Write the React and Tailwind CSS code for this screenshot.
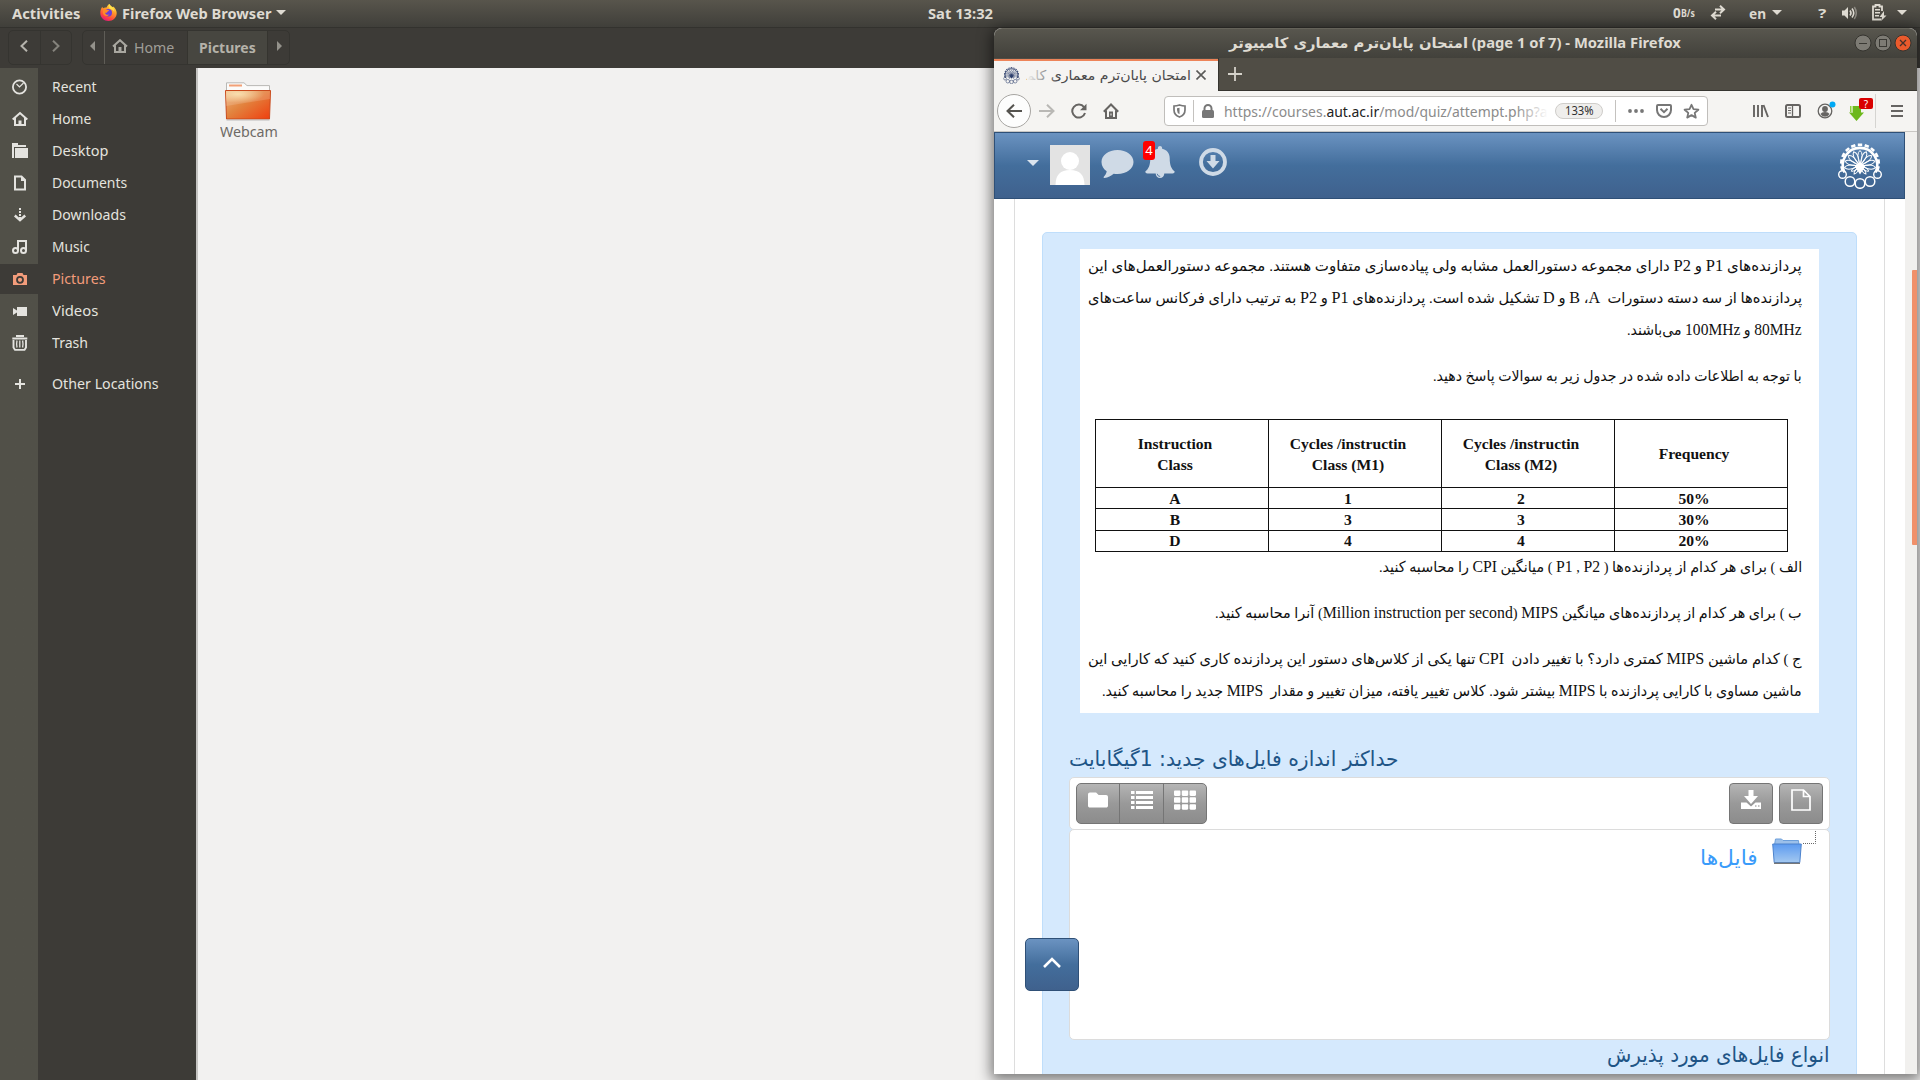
import React, { useLayoutEffect, useRef, useState } from "react";
import { FaFolder, FaTh } from "react-icons/fa";

// Single line of text stretched or squeezed to an exact width.
function Fit({ w, justify = false, className = "", dir, children }) {
  const ref = useRef(null);
  const [style, setStyle] = useState({});
  useLayoutEffect(() => {
    const el = ref.current;
    const natural = el.offsetWidth;
    const spaces = (el.textContent.match(/ /g) || []).length;
    if (justify && spaces && natural < w) {
      setStyle({ wordSpacing: `${(w - natural) / spaces}px` });
    } else {
      setStyle({ transform: `scaleX(${w / natural})` });
    }
  }, [w, justify]);
  return (
    <span className={`block shrink-0 text-left ${className}`} dir="ltr" style={{ width: w }}>
      <span ref={ref} dir={dir} className="inline-block origin-left whitespace-pre" style={style}>
        {children}
      </span>
    </span>
  );
}

// Persian line whose Latin runs are set slightly larger than the Persian letters.
function Line({ w, justify, className, text }) {
  return (
    <Fit w={w} justify={justify} dir="rtl" className={className}>
      {text.split(/([A-Za-z0-9]+)/).map((part, i) =>
        i % 2 ? <span key={i} className="text-[16.5px] leading-none">{part}</span> : part
      )}
    </Fit>
  );
}

const Caret = ({ className = "" }) => (
  <svg className={`shrink-0 ${className}`} width="10" height="5" viewBox="0 0 10 5">
    <path d="M0 0h10L5 5z" fill="currentColor" />
  </svg>
);

function FirefoxLogo() {
  return (
    <svg width="17" height="17" viewBox="0 0 17 17" className="shrink-0">
      <defs>
        <linearGradient id="fx" x1="0.8" y1="0" x2="0.3" y2="1">
          <stop offset="0" stopColor="#fff14f" />
          <stop offset="0.4" stopColor="#ff9a2a" />
          <stop offset="0.75" stopColor="#ff4a3c" />
          <stop offset="1" stopColor="#e5157e" />
        </linearGradient>
      </defs>
      <path d="M9.500 0c.5 1.500 1.700 2.200 3 3.200l.6-.7c2.200 1.600 3.600 4 3.600 6.500 0 4.500-3.700 8-8.200 8S.3 13.500.3 9c0-2 .4-4.300 2-6.300l.7 1.600C4 3.400 5.500 3.300 6.500 3.600 7.200 2 8 .6 9.500 0z" fill="url(#fx)" />
      <circle cx="8.300" cy="8.800" r="3.700" fill="#6b3fd6" />
      <path d="M3.600 5.600c1.500-.7 3-.4 4 .4l1.600.2c-.2 1-1.600 1-2 1.800-.2.900-1.200 1-2 .7.300 2 2.500 2.600 4.200 1.500-1.600 3-6 2-6.500-1.200-.1-1.300.1-2.500.7-3.400z" fill="#ff8a28" />
      <path d="M9.500 0c.5 1.500 1.700 2.200 3 3.200 1.300 1.200 1.900 2.700 1.700 4.500C13 5.600 11 5.200 9.400 4.600 8.600 3 8.700 1.200 9.500 0z" fill="#ffe14a" />
    </svg>
  );
}

const HomeGlyph = ({ className = "" }) => (
  <svg width="16" height="14" viewBox="0 0 16 14" className={`shrink-0 ${className}`}>
    <path d="M1 7.500L8 1.200l7 6.300M3 6.500V13h10V6.500" fill="none" stroke="currentColor" strokeWidth="2" />
    <path d="M6.500 13V8h3v5z" fill="currentColor" />
  </svg>
);

const sideIcons = {
  Recent: (
    <>
      <circle cx="7.500" cy="8" r="6.600" fill="none" stroke="currentColor" strokeWidth="1.800" />
      <path d="M4.500 5l3 3 4-4" fill="none" stroke="currentColor" strokeWidth="1.200" />
    </>
  ),
  Home: (
    <>
      <path d="M.7 8.500L8 2l7.300 6.500M3 7v7h10V7" fill="none" stroke="currentColor" strokeWidth="2" />
      <path d="M6.500 14V9.500h3V14z" fill="currentColor" />
    </>
  ),
  Desktop: <path d="M0 0h6v2h8v2H2v11H0zM3 5h13v10H3z" fill="currentColor" />,
  Documents: (
    <>
      <path d="M3 1.500h6.500L13 5v9.500H3z" fill="none" stroke="currentColor" strokeWidth="2" />
      <path d="M9 1v5h5z" fill="currentColor" />
    </>
  ),
  Downloads: (
    <>
      <path d="M7 1h2v2H7zM7 4h2v2H7zM7 7h2v2H7zM7 10h2v3H7z" fill="currentColor" />
      <path d="M2.800 8.500L8 13.200l5.200-4.700" fill="none" stroke="currentColor" strokeWidth="2.400" />
    </>
  ),
  Music: (
    <>
      <circle cx="3.500" cy="11.500" r="2.500" fill="none" stroke="currentColor" strokeWidth="2" />
      <circle cx="11.500" cy="11.500" r="2.500" fill="none" stroke="currentColor" strokeWidth="2" />
      <path d="M6 11.500V2h8v9.500" fill="none" stroke="currentColor" strokeWidth="2" />
    </>
  ),
  Pictures: (
    <>
      <path d="M1 4h3.500l1-2h5l1 2H15v10H1z" fill="currentColor" />
      <circle cx="8" cy="8.800" r="3" fill="none" stroke="#3d3b37" strokeWidth="1.800" />
    </>
  ),
  Videos: <path d="M5 4h10v9H5V9.500L1 12V5l4 2.500z" fill="currentColor" />,
  Trash: (
    <>
      <path d="M4 1h8M.3 3.500h15" stroke="currentColor" strokeWidth="1.800" />
      <path d="M1.500 5v7.500l1.500 2.400h9.500l1.500-2.400V5" fill="none" stroke="currentColor" strokeWidth="1.900" />
      <path d="M5 5.500q-.8 3.500 0 7M7.800 5.500v7M10.600 5.500q.8 3.500 0 7" fill="none" stroke="currentColor" strokeWidth="1.300" />
    </>
  ),
  "Other Locations": <path d="M7 3h2v4h4v2H9v4H7V9H3V7h4z" fill="currentColor" />,
};

const places = [
  ["Recent", 45],
  ["Home", 39],
  ["Desktop", 56],
  ["Documents", 75],
  ["Downloads", 74],
  ["Music", 38],
  ["Pictures", 54],
  ["Videos", 46],
  ["Trash", 36],
  ["Other Locations", 107],
];

function TopBar() {
  return (
    <header className="flex h-7 items-center border-b border-[#33322e] bg-linear-to-b from-[#58554c] to-[#403f3a] pb-0.5 text-[14.5px] leading-[26px] font-bold text-[#dfdbd2]">
      <Fit w={68} className="ml-3">Activities</Fit>
      <div className="ml-5"><FirefoxLogo /></div>
      <Fit w={149} className="ml-[5px]">Firefox Web Browser</Fit>
      <Caret className="ml-[5px]" />
      <Fit w={65} className="ml-[642px]">Sat 13:32</Fit>
      <Fit w={8} className="ml-[680px] text-[13.5px]">0</Fit>
      <Fit w={14} className="text-[10px]">B/s</Fit>
      <svg width="16" height="15" viewBox="0 0 16 15" className="ml-[15px] shrink-0" fill="none" stroke="currentColor" strokeWidth="2">
        <path d="M5 4.500h9M10 .8l4 3.700-4 3.700M11 10.500H2M6 6.800l-4 3.700 4 3.700" />
      </svg>
      <Fit w={17} className="ml-[23px]">en</Fit>
      <Caret className="ml-1.5" />
      <Fit w={8} className="ml-9 text-[13px]">?</Fit>
      <svg width="17" height="14" viewBox="0 0 17 14" className="ml-[15px] shrink-0">
        <path d="M1 4.500h2.500L7 1v12L3.500 9.500H1z" fill="currentColor" />
        <path d="M9 4.500q2 2.500 0 5M11 2.500q3.500 4.500 0 9" fill="none" stroke="currentColor" strokeWidth="1.600" />
        <path d="M13.300 1q4 6 0 12" fill="none" stroke="#8d8a82" strokeWidth="1.500" />
      </svg>
      <svg width="15" height="17" viewBox="0 0 15 17" className="ml-3.5 shrink-0">
        <path d="M9 15.500H1V2.500h2.500V1h4v1.500H10V7" fill="none" stroke="currentColor" strokeWidth="1.800" />
        <path d="M3 5h5v1.500H3zM3 8h5v1.500H3zM3 11h4v1.500H3z" fill="currentColor" />
        <path d="M12 7l-4.500 6H10l-1 4 5.500-5.500H12z" fill="currentColor" />
      </svg>
      <Caret className="ml-2.5" />
    </header>
  );
}

function Files() {
  return (
    <>
      <div className="flex h-10 bg-[#3d3b37] pt-0.5 text-[14.5px] leading-[35px] text-[#a09e97]">
        <div className="ml-2 flex h-[35px] w-16 rounded-[5px] border border-[#353430]">
          <div className="flex w-8 items-center justify-center border-r border-[#353430] pr-0.5 pb-1">
            <svg width="8" height="12" viewBox="0 0 8 12"><path d="M7 .7L1.500 6 7 11.300" fill="none" stroke="#b5b3ac" strokeWidth="2" /></svg>
          </div>
          <div className="flex flex-1 items-center justify-center pb-1">
            <svg width="8" height="12" viewBox="0 0 8 12"><path d="M1 .7L6.500 6 1 11.300" fill="none" stroke="#85837c" strokeWidth="2" /></svg>
          </div>
        </div>
        <div className="ml-2.5 flex h-[35px] w-[208px] rounded-[5px] border border-[#353430]">
          <div className="flex w-[22px] items-center justify-center border-r border-[#5f5d57] pr-0.5 pb-1">
            <svg width="5" height="10" viewBox="0 0 5 10"><path d="M5 0v10L0 5z" fill="#94928b" /></svg>
          </div>
          <div className="flex w-[82px] items-center pl-[7px]">
            <HomeGlyph className="-mt-1 text-[#a9a7a0]" />
            <Fit w={40} className="ml-1.5">Home</Fit>
          </div>
          <div className="flex w-[81px] items-center border-x border-[#35342f] bg-[#474640] pl-[11px] font-bold text-[#b5b2a9]">
            <Fit w={57}>Pictures</Fit>
          </div>
          <div className="flex flex-1 items-center justify-center pb-1 pl-0.5">
            <svg width="5" height="10" viewBox="0 0 5 10"><path d="M0 0v10l5-5z" fill="#94928b" /></svg>
          </div>
        </div>
      </div>
      <div className="flex h-[1012px] bg-[#f2f1f0]">
        <nav className="flex w-[198px] flex-col border-r-2 border-[#c4c3c1] bg-linear-to-r from-[#515048] from-[38px] to-[#3d3b37] to-[38px] pt-1 text-[14.5px] leading-[28px] text-[#e4e3df]">
          {places.map(([name, w]) => (
            <div
              key={name}
              className={
                name === "Pictures"
                  ? "mb-0.5 flex h-[30px] items-start bg-[#3d3b37] text-[#f39c7b]"
                  : name === "Other Locations"
                    ? "mt-[9px] mb-0.5 flex h-[30px] items-start"
                    : "mb-0.5 flex h-[30px] items-start"
              }
            >
              <svg width="16" height="16" viewBox="0 0 16 16" className="mt-[7px] ml-3 shrink-0">{sideIcons[name]}</svg>
              <Fit w={w} className="ml-6">{name}</Fit>
            </div>
          ))}
        </nav>
        <div className="flex w-[100px] flex-col items-center pt-3.5">
          <svg width="48" height="39" viewBox="0 0 48 39">
            <defs>
              <linearGradient id="fold" x1="0" y1="0" x2="1" y2="0.9">
                <stop offset="0" stopColor="#efb27c" />
                <stop offset="0.45" stopColor="#e2843f" />
                <stop offset="1" stopColor="#ee4412" />
              </linearGradient>
              <radialGradient id="glow" cx="0.27" cy="0.2" r="0.6">
                <stop offset="0" stopColor="#f8d9a0" />
                <stop offset="1" stopColor="#f8d9a0" stopOpacity="0" />
              </radialGradient>
            </defs>
            <path d="M2.500 12V.8h17.500l3 2.800h22.500V12z" fill="#fbfbfa" stroke="#b9b8b5" />
            <path d="M5 2.500h13v2H5z" fill="#f2a077" />
            <path d="M1.500 8.500h45l-1 28.500h-43z" fill="url(#fold)" stroke="#c94a1c" />
            <path d="M2 9h44v10L2 24z" fill="url(#glow)" />
            <path d="M2 9h44v8L2 24z" fill="#fff" opacity="0.15" />
            <path d="M2.500 38h43" stroke="#bbb" />
          </svg>
          <Fit w={58} className="-mt-0.5 ml-px text-[14.5px] leading-6 text-[#6e6a66]">Webcam</Fit>
        </div>
      </div>
    </>
  );
}

// University crest: toothed arch, radiating petals and a chain of rings.
function Crest({ size, className = "" }) {
  const petals = [-144, -120, -96, -72, -48, -24, 0, 24, 48, 72, 96, 120, 144];
  const teeth = Array.from({ length: 11 }, (_, i) => -105 + i * 21);
  return (
    <svg width={size} height={size} viewBox="0 0 44 46" className={`shrink-0 ${className}`} fill="none" stroke="currentColor">
      <path d="M6.500 29.500A17.200 17.200 0 1 1 37.500 29.500" strokeWidth="2.600" />
      {teeth.map((a) => (
        <path key={a} d="M19.800 1.800h4.400" strokeWidth="2.600" transform={`rotate(${a} 22 20.500)`} />
      ))}
      {petals.map((a) => (
        <path
          key={a}
          d={Math.abs(a) > 100 ? "M22 21.500q-2.600-6 0-8.500q2.600 2.500 0 8.500z" : "M22 21.500q-4.200-11 0-14q4.200 3 0 14z"}
          strokeWidth="1"
          transform={`rotate(${a} 22 23)`}
        />
      ))}
      <path d="M16 22l6 9.500 6-9.500-6 2z" fill="currentColor" stroke="none" />
      <circle cx="22" cy="22.500" r="2.600" fill="currentColor" stroke="none" />
      <circle cx="4.500" cy="31.500" r="3.800" strokeWidth="1.400" />
      <circle cx="39.500" cy="31.500" r="3.800" strokeWidth="1.400" />
      <circle cx="12" cy="38.500" r="4.800" strokeWidth="1.500" />
      <circle cx="32" cy="38.500" r="4.800" strokeWidth="1.500" />
      <circle cx="22" cy="40.500" r="4.800" strokeWidth="1.500" />
    </svg>
  );
}

function TitleBar() {
  return (
    <div className="flex h-[30px] shrink-0 items-center rounded-t-lg border-t border-[#65635a] bg-linear-to-b from-[#58564e] to-[#42413b] text-[14.5px] leading-[26px] font-bold text-[#dfdbd2]">
      <Fit w={452} className="-mt-0.5 ml-[235px]">
        <bdi dir="rtl" className="font-['DejaVu_Sans']">امتحان پایان‌ترم معماری کامپیوتر</bdi>
        {" (page 1 of 7) - Mozilla Firefox"}
      </Fit>
      <svg width="60" height="18" viewBox="0 0 60 18" className="-mt-px ml-[172px] shrink-0">
        <circle cx="10" cy="9" r="8" fill="#7d7b74" stroke="#35342f" />
        <path d="M6 9.500h8" stroke="#3a3934" />
        <circle cx="30" cy="9" r="8" fill="#7d7b74" stroke="#35342f" />
        <rect x="26.500" y="5.500" width="7" height="7" fill="none" stroke="#3a3934" />
        <circle cx="50" cy="9" r="8" fill="#ea5a2c" stroke="#35342f" />
        <path d="M47 6l6 6M53 6l-6 6" stroke="#45302a" strokeWidth="1.300" />
      </svg>
    </div>
  );
}

function TabStrip() {
  return (
    <div className="flex h-[33px] shrink-0 bg-[#504d45]">
      <div className="mt-px flex w-56 shrink-0 items-center border-t-2 border-[#ed8459] bg-[#f5f4f2] pb-0.5">
        <Crest size={17} className="ml-[9px] text-[#2c3e6b]" />
        <div className="relative ml-[7px] flex h-full items-center">
          <Fit w={164} dir="rtl" className="font-['DejaVu_Sans'] text-[13.5px] leading-[28px] text-[#4a4a4a]">امتحان پایان‌ترم معماری کا‍م‍</Fit>
          <div className="absolute inset-y-0 left-0 w-8 bg-linear-to-r from-[#f5f4f2] to-[#f5f4f2]/0" />
        </div>
        <svg width="10" height="10" viewBox="0 0 10 10" className="ml-[5px] shrink-0"><path d="M.5.5l9 9M9.500.5l-9 9" stroke="#5a5a58" strokeWidth="1.600" /></svg>
      </div>
      <div className="flex flex-1 items-center border-b border-l border-[#363530] pl-[9px]">
        <svg width="14" height="14" viewBox="0 0 14 14"><path d="M7 0v14M0 7h14" stroke="#d5d2ca" strokeWidth="1.800" /></svg>
      </div>
    </div>
  );
}

function NavBar() {
  return (
    <div className="flex h-[41px] shrink-0 items-center border-b border-[#c9c7c4] bg-[#f5f4f2] text-[#666462]">
      <div className="ml-[3px] flex size-[34px] shrink-0 items-center justify-center rounded-full border border-[#a7a5a2] bg-[#fdfdfd]">
        <svg width="16" height="14" viewBox="0 0 16 14"><path d="M16 7H1.500M8 .7L1.500 7 8 13.300" fill="none" stroke="#55534f" strokeWidth="2" /></svg>
      </div>
      <svg width="16" height="14" viewBox="0 0 16 14" className="ml-2 shrink-0"><path d="M0 7h14.500M8 .7L14.500 7 8 13.300" fill="none" stroke="#b9b8b5" strokeWidth="2" /></svg>
      <svg width="16" height="16" viewBox="0 0 16 16" className="ml-4 shrink-0">
        <path d="M13 4.200A6.500 6.500 0 1 0 14 10" fill="none" stroke="currentColor" strokeWidth="2" />
        <path d="M15.500.8v6.400H9z" fill="currentColor" />
      </svg>
      <svg width="16" height="16" viewBox="0 0 16 16" className="ml-4 shrink-0">
        <path d="M.8 8.800L8 1.500l7.200 7.300M3 7.500V15h10V7.500" fill="none" stroke="currentColor" strokeWidth="2" />
        <path d="M6 14V8.500h4V14z" fill="currentColor" /><path d="M8 10.500v2" stroke="#f5f4f2" />
      </svg>
      <div className="ml-[45px] flex h-[30px] w-[544px] shrink-0 items-center rounded-[4px] border border-[#c0bebb] bg-white text-[#777]">
        <svg width="13" height="14" viewBox="0 0 13 14" className="ml-2 shrink-0">
          <path d="M6.500 1q3 .9 5.500 1v4q0 5-5.500 7Q1 11 1 6V2q2.500-.1 5.500-1z" fill="none" stroke="currentColor" strokeWidth="1.700" />
          <path d="M6.500 3.800v6.500Q4 9 4 6V4.200z" fill="currentColor" />
        </svg>
        <div className="ml-[7px] h-[22px] w-px shrink-0 bg-[#c4c2bf]" />
        <svg width="12" height="14" viewBox="0 0 12 14" className="ml-2 shrink-0"><rect y="6" width="12" height="8" rx="1.500" fill="currentColor" /><path d="M2.500 7V4.500a3.500 3.500 0 0 1 7 0V7" fill="none" stroke="currentColor" strokeWidth="2" /></svg>
        <div className="relative ml-2.5 w-[324px] shrink-0">
          <Fit w={324} className="text-[15px] leading-[28px] text-[#8b8b8b]">
            https://courses.<span className="text-[#222]">aut.ac.ir</span>/mod/quiz/attempt.php?a
          </Fit>
          <div className="absolute inset-y-0 right-0 w-8 bg-linear-to-r from-white/0 to-white" />
        </div>
        <div className="ml-[7px] flex h-4 w-12 shrink-0 items-center justify-center rounded-full border border-[#cfcdca] bg-[#efeeec] text-[12px] leading-4 text-[#333]">
          <Fit w={29}>133%</Fit>
        </div>
        <div className="ml-3 h-[22px] w-px shrink-0 bg-[#c4c2bf]" />
        <svg width="16" height="4" viewBox="0 0 16 4" className="ml-3 shrink-0" fill="currentColor"><circle cx="2" cy="2" r="1.900" /><circle cx="8" cy="2" r="1.900" /><circle cx="14" cy="2" r="1.900" /></svg>
        <svg width="16" height="14" viewBox="0 0 16 14" className="ml-3 shrink-0" fill="none" stroke="currentColor" strokeWidth="2"><path d="M1 2q0-1 1-1h12q1 0 1 1v4a7 7 0 0 1-14 0z" /><path d="M4.500 4.800L8 8.200l3.500-3.400" /></svg>
        <svg width="17" height="16" viewBox="0 0 17 16" className="ml-[11px] shrink-0"><path d="M8.500 1.800l2 4.400 4.900.5-3.700 3.200 1.100 4.700-4.300-2.500-4.300 2.500 1.100-4.700-3.700-3.200 4.900-.5z" fill="none" stroke="currentColor" strokeWidth="1.800" strokeLinejoin="round" /></svg>
      </div>
      <svg width="16" height="14" viewBox="0 0 16 14" className="ml-[45px] shrink-0" fill="none" stroke="currentColor" strokeWidth="1.900"><path d="M1 1v12M5 1v12M9 1v12M10.500 1l4.500 12" /></svg>
      <svg width="16" height="14" viewBox="0 0 16 14" className="ml-4 shrink-0" fill="none" stroke="currentColor" strokeWidth="2"><rect x="1" y="1" width="14" height="12" rx="1.500" /><path d="M7.500 1v12" strokeWidth="1.300" /><path d="M3 4h3M3 6.500h3M3 9h3" strokeWidth="1.200" /></svg>
      <svg width="19" height="18" viewBox="0 0 19 18" className="-mt-0.5 ml-4 shrink-0">
        <circle cx="8" cy="10" r="6.800" fill="none" stroke="currentColor" strokeWidth="1.300" />
        <circle cx="8" cy="8" r="2.900" fill="currentColor" /><path d="M3.500 13q1-2 4.500-2t4.500 2Q11 15.700 8 15.700T3.500 13z" fill="currentColor" />
        <circle cx="15.500" cy="3.500" r="3" fill="#00a9f5" />
      </svg>
      <div className="relative ml-[13px] h-6 w-6 shrink-0">
        <svg width="15" height="17" viewBox="0 0 15 17" className="mt-1.5"><path d="M4 1h8v6.500h3L7.500 16 0 7.500h4z" fill="#6db81c" /><path d="M1.500 1v6M3 1v6" stroke="#8fd13c" /></svg>
        <div className="absolute -top-px left-2.5 flex h-[11px] w-3.5 items-center justify-center rounded-[2px] bg-[#d90000] text-[10px] leading-none text-white">?</div>
      </div>
      <div className="ml-0.5 h-[34px] w-px shrink-0 bg-[#d5d4d1]" />
      <svg width="12" height="12" viewBox="0 0 12 12" className="ml-[15px] shrink-0"><path d="M0 1h12M0 6h12M0 11h12" stroke="currentColor" strokeWidth="2" /></svg>
    </div>
  );
}

function SiteHeader() {
  return (
    <div className="flex h-[67px] w-[911px] shrink-0 border border-[#2f5077] bg-linear-to-b from-[#6b93c1] via-[#436e9c] via-50% to-[#3f618d] pt-3 text-[#cfdae6]">
      <svg width="12" height="6" viewBox="0 0 12 6" className="mt-[15px] ml-8 shrink-0"><path d="M0 0h12L6 6z" fill="#dbe4ee" /></svg>
      <svg width="40" height="40" viewBox="0 0 40 40" className="ml-[11px] shrink-0"><path d="M0 0h40v40H0z" fill="#e3e3e3" /><circle cx="20" cy="16" r="9" fill="#fff" /><path d="M5.500 40q0-15 14.500-15t14.500 15z" fill="#fff" /></svg>
      <svg width="33" height="29" viewBox="0 0 33 29" className="mt-[5px] ml-[11px] shrink-0">
        <path d="M16.500 0C25.500 0 32.500 5.300 32.500 12s-7 12-16 12c-1.300 0-2.600-.1-3.800-.3-2.600 2.300-5.700 3.900-9.200 4.300-.9.100-1.200-.7-.7-1.200 1.500-1.500 2.600-3.300 2.900-5.500C2.500 19.100.5 15.800.5 12 .5 5.300 7.500 0 16.500 0z" fill="currentColor" />
      </svg>
      <div className="relative ml-[11px] w-[30px] shrink-0">
        <svg width="30" height="33" viewBox="0 0 30 33" className="mt-px">
          <path d="M15 0c1.200 0 2.100.9 2.100 2v.7c4.700.9 7.600 4.400 7.600 9.300 0 7.500 1.900 11 5 13.500 0 1.200-1 2-2.100 2h-8.300c0 2.400-1.900 4.500-4.300 4.500s-4.300-2.100-4.300-4.500H2.400c-1.200 0-2.100-.8-2.100-2 3.100-2.500 5-6 5-13.500 0-4.900 2.900-8.400 7.600-9.300V2c0-1.100.9-2 2.100-2z" fill="currentColor" />
          <path d="M12.200 27.800q.4 2.600 3 2.700" fill="none" stroke="#47719f" strokeWidth="0.900" />
        </svg>
        <div className="absolute -top-1 -left-0.5 flex h-[19px] w-3 items-center justify-center rounded-[3px] bg-[#f00] text-[13px] leading-none text-white">4</div>
      </div>
      <svg width="28" height="28" viewBox="0 0 28 28" className="mt-[3px] ml-6 shrink-0"><circle cx="14" cy="14" r="12" fill="none" stroke="currentColor" strokeWidth="3.800" /><path d="M11.500 7h5v6h4L14 20.500 7.500 13h4z" fill="currentColor" /></svg>
      <Crest size={46} className="-mt-0.5 ml-[610px] text-white" />
    </div>
  );
}

const rows = [
  ["A", "1", "2", "50%"],
  ["B", "3", "3", "30%"],
  ["D", "4", "4", "20%"],
];

function ExamSheet() {
  const head = "border-[1.5px] border-[#111] p-0 pr-3.5";
  return (
    <div className="ml-[37px] flex h-[464px] w-[739px] flex-col items-end bg-white pt-px pr-[17px] font-['Liberation_Serif','DejaVu_Sans',serif] text-[15px] leading-[32px] text-[#111]">
      <Line w={714} justify text="پردازنده‌های P1 و P2 دارای مجموعه دستورالعمل مشابه ولی پیاده‌سازی متفاوت هستند. مجموعه دستورالعمل‌های این" />
      <Line w={714} justify text={"پردازنده‌ها از سه دسته دستورات  A،\u200f B و D تشکیل شده است. پردازنده‌های P1 و P2 به ترتیب دارای فرکانس ساعت‌های"} />
      <Line w={175} text="80MHz و 100MHz می‌باشند." />
      <Line w={369} className="mt-3.5" text="با توجه به اطلاعات داده شده در جدول زیر به سوالات پاسخ دهید." />
      <table className="mt-[27px] mr-3.5 h-[133px] w-[693px] table-fixed border-collapse text-center text-[15.6px] leading-[21px] font-bold">
        <thead>
          <tr className="h-[68px]">
            <th className={head}>Instruction<br />Class</th>
            <th className={head}>Cycles /instructin<br />Class (M1)</th>
            <th className={head}>Cycles /instructin<br />Class (M2)</th>
            <th className={head}>Frequency</th>
          </tr>
        </thead>
        <tbody>
          {rows.map((r) => (
            <tr key={r[0]} className="h-[21px]">
              {r.map((c, i) => (
                <td key={i} className="border-[1.5px] border-[#111] p-0 pr-3.5 leading-[19px]">{c}</td>
              ))}
            </tr>
          ))}
        </tbody>
      </table>
      <Line w={423} className="-mt-px" text="الف ) برای هر کدام از پردازنده‌ها ( P1 , P2 ) میانگین CPI را محاسبه کنید." />
      <Line w={587} className="mt-3.5" text={"ب ) برای هر کدام از پردازنده‌های میانگین MIPS \u200f(Million instruction per second) آنرا محاسبه کنید."} />
      <Line w={714} className="mt-3.5" text="ج ) کدام ماشین MIPS کمتری دارد؟ با تغییر دادن  CPI تنها یکی از کلاس‌های دستور این پردازنده کاری کنید که کارایی این" />
      <Line w={700} text="ماشین مساوی با کارایی پردازنده با MIPS بیشتر شود. کلاس تغییر یافته، میزان تغییر و مقدار  MIPS جدید را محاسبه کنید." />
    </div>
  );
}

function FilePicker() {
  const btn = "flex h-[41px] justify-center border border-[#757575] bg-linear-to-b from-[#b5b5b5] via-[#999] to-[#8c8c8c] text-white";
  return (
    <>
      <Fit w={330} dir="rtl" className="mt-[28px] ml-[26px] font-['DejaVu_Sans'] text-[21px] leading-[36px] text-[#1f5586]">حداکثر اندازه فایل‌های جدید: 1گیگابایت</Fit>
      <div className="ml-[26px] flex h-[53px] w-[761px] rounded-[5px] border border-[#dcdcdc] bg-white px-1.5 pt-[5px]">
        <div className="flex">
          <div className={`${btn} w-11 rounded-l-[5px]`}><FaFolder className="mt-1.5 h-5 w-5" /></div>
          <div className={`${btn} -ml-px w-[45px]`}>
            <svg width="22" height="18" viewBox="0 0 22 18" className="mt-[7px]"><path d="M0 0h3.500v3H0zM5 0h17v3H5zM0 5h3.500v3H0zM5 5h17v3H5zM0 10h3.500v3H0zM5 10h17v3H5zM0 15h3.500v3H0zM5 15h17v3H5z" fill="#fff" /></svg>
          </div>
          <div className={`${btn} -ml-px w-11 rounded-r-[5px]`}><FaTh className="mt-[5px] h-[22px] w-[22px]" /></div>
        </div>
        <div className={`${btn} ml-auto w-11 rounded-[4px]`}>
          <svg width="20" height="19" viewBox="0 0 20 19" className="mt-1.5"><path d="M7.500 0h5v6H17l-7 8-7-8h4.500z" fill="#fff" /><path d="M0 12.500h5.500L10 16.500l4.500-4H20V19H0z" fill="#fff" /><path d="M14 16h1.500M17 16h1.500" stroke="#888" strokeWidth="1.200" /></svg>
        </div>
        <div className={`${btn} ml-1.5 w-11 rounded-[4px]`}>
          <svg width="20" height="22" viewBox="0 0 20 22" className="mt-[5px]" fill="none" stroke="#fff" strokeWidth="1.700"><path d="M1 1h11.500L19 7.500V21H1zM12.500 1v6.500H19" /></svg>
        </div>
      </div>
      <div className="-mt-px ml-[26px] flex h-[211px] w-[761px] justify-end rounded-[5px] border border-[#dcdcdc] bg-white">
        <Fit w={58} dir="rtl" className="mt-2.5 mr-3.5 font-['DejaVu_Sans'] text-[21px] leading-[36px] text-[#3a9bfa]">فایل‌ها</Fit>
        <svg width="30" height="27" viewBox="0 0 30 27" className="mt-2 shrink-0">
          <defs><linearGradient id="bf" x1="0" y1="0" x2="0" y2="1"><stop offset="0" stopColor="#5c9af0" /><stop offset="1" stopColor="#a3c8f0" /></linearGradient></defs>
          <path d="M2.500 7l1-6h6l1.500 1.500h15.500l.5 4.500z" fill="#9cc0ea" stroke="#6d9fda" />
          <path d="M.7 6h28.600l-1.500 18.500H2.200z" fill="url(#bf)" stroke="#4c82cc" />
          <path d="M2 25.300h26" stroke="#777" strokeWidth="1.400" />
        </svg>
        <svg width="14" height="14" viewBox="0 0 14 14" className="mr-[13px] shrink-0"><path d="M13.500 1v12.500H1" fill="none" stroke="#666" strokeDasharray="1 1" /></svg>
      </div>
      <Fit w={223} dir="rtl" className="ml-[564px] font-['DejaVu_Sans'] text-[21px] leading-[30px] text-[#1f5586]">انواع فایل‌های مورد پذیرش</Fit>
    </>
  );
}

function Browser() {
  return (
    <section className="absolute top-7 left-[994px] flex h-[1046px] w-[923px] flex-col rounded-t-lg bg-white shadow-[0_3px_14px_3px_rgba(0,0,0,0.5)]">
      <TitleBar />
      <TabStrip />
      <NavBar />
      <div className="flex min-h-0 flex-1">
        <main className="relative flex w-[911px] flex-col overflow-hidden">
          <SiteHeader />
          <div className="ml-5 min-h-0 w-[871px] flex-1 border-x border-[#ddd]">
            <div className="mt-[33px] ml-[27px] h-[900px] w-[815px] rounded-t-[5px] border border-[#bfdefb] bg-[#d5e9fd] pt-4">
              <ExamSheet />
              <FilePicker />
            </div>
          </div>
          <button className="absolute top-[806px] left-[31px] flex h-[53px] w-[54px] items-center justify-center rounded-[5px] border border-[#2f5077] bg-linear-to-b from-[#6b93c1] via-[#436e9c] to-[#3f618d]">
            <svg width="18" height="11" viewBox="0 0 18 11" className="-mt-1"><path d="M1 10l8-8 8 8" fill="none" stroke="#fff" strokeWidth="2.600" /></svg>
          </button>
        </main>
        <div className="flex w-3 justify-end bg-[#f1f0ee] pt-[138px]">
          <div className="h-[275px] w-[5px] rounded-l-[1px] bg-[#f1906a]" />
        </div>
      </div>
    </section>
  );
}

export default function App() {
  return (
    <div className="relative h-[1080px] w-[1920px] overflow-hidden bg-[#f2f1f0] font-['Noto_Sans','DejaVu_Sans',sans-serif]">
      <TopBar />
      <Files />
      <Browser />
    </div>
  );
}
